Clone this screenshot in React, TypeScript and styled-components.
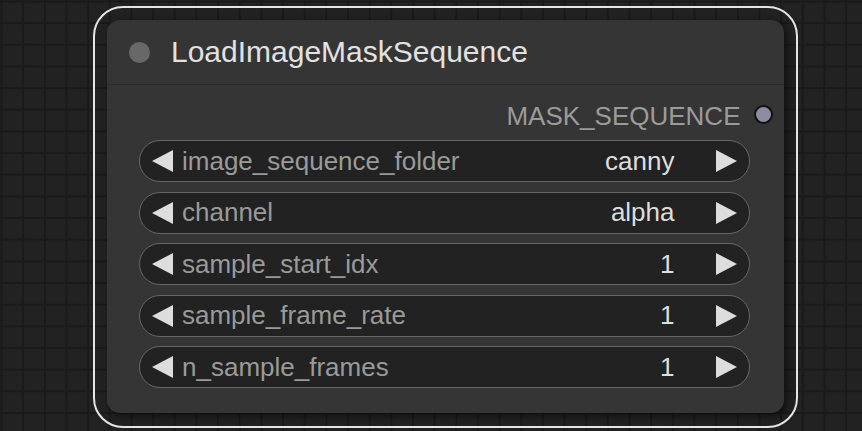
import React from 'react';
import styled, { createGlobalStyle } from 'styled-components';

const GlobalStyle = createGlobalStyle`
  html, body {
    margin: 0;
    padding: 0;
    background-color: #222222;
  }
  body {
    font-family: "Liberation Sans", Arial, sans-serif;
  }
`;

const Canvas = styled.div`
  width: 862px;
  height: 431px;
  overflow: hidden;
  box-sizing: border-box;
  padding: 6px 0 0 93px;
  background-color: #222222;
  background-image:
    linear-gradient(to right, #1a1a1a 0, #1a1a1a 2px, transparent 2px),
    linear-gradient(to bottom, #1a1a1a 0, #1a1a1a 2px, transparent 2px);
  background-size: 21.67px 21.67px;
  background-position: 0.5px 0.5px;
`;

const Selection = styled.div`
  width: 705px;
  height: 422px;
  box-sizing: border-box;
  border: 2px solid #e6e6e6;
  border-radius: 30px;
  padding: 12px 12px 0 11.5px;
`;

const Node = styled.div`
  width: 677px;
  height: 393px;
  background: #353535;
  border-radius: 13px;
  box-shadow: 3px 3px 9px rgba(0, 0, 0, 0.55);
  display: flex;
  flex-direction: column;
  overflow: hidden;
`;

const TitleBar = styled.div`
  height: 65px;
  flex: none;
  display: flex;
  align-items: center;
  padding-left: 22px;
  gap: 21.5px;
  border-bottom: 1.5px solid #2a2a2a;
  box-sizing: border-box;
`;

const TitleDot = styled.span`
  width: 21px;
  height: 21px;
  border-radius: 50%;
  background: #686868;
  flex: none;
  margin-top: 1px;
`;

const Title = styled.span`
  color: #e2e2e2;
  font-size: 30px;
  line-height: 1;
`;

const Body = styled.div`
  display: flex;
  flex-direction: column;
  padding-top: 9px;
`;

const OutputRow = styled.div`
  height: 42px;
  display: flex;
  align-items: center;
  justify-content: flex-end;
  padding-right: 11px;
  gap: 13px;
  margin-bottom: 4px;
`;

const OutputLabel = styled.span`
  color: #9b9b9b;
  font-size: 26px;
  margin-top: 2px;
`;

const Slot = styled.span`
  width: 15px;
  height: 15px;
  border-radius: 50%;
  background: #8c8ca3;
  border: 2.5px solid #111;
  flex: none;
  margin-top: -1px;
`;

const Widgets = styled.div`
  display: flex;
  flex-direction: column;
  gap: 9.6px;
  padding: 0 33.5px 0 32px;
`;

const Widget = styled.div`
  height: 42px;
  box-sizing: border-box;
  border: 1.5px solid #666;
  border-radius: 21px;
  background: #222;
  display: flex;
  align-items: center;
  padding: 0 12.5px 0 12.5px;
  font-size: 26px;
`;

const Label = styled.span`
  color: #9a9a9a;
  margin-left: 8px;
  flex: 1;
  white-space: nowrap;
`;

const Value = styled.span`
  color: #dedede;
  margin-right: 40px;
  white-space: nowrap;
`;

const Arrow = styled.svg`
  width: 22px;
  height: 22px;
  flex: none;
  fill: #dddddd;
`;

const LeftArrow = () => (
  <Arrow viewBox="0 0 22 22">
    <polygon points="0,11 21,0 21,22" />
  </Arrow>
);

const RightArrow = () => (
  <Arrow viewBox="0 0 22 22">
    <polygon points="22,11 1,0 1,22" />
  </Arrow>
);

const widgets = [
  { name: 'image_sequence_folder', value: 'canny' },
  { name: 'channel', value: 'alpha' },
  { name: 'sample_start_idx', value: '1' },
  { name: 'sample_frame_rate', value: '1' },
  { name: 'n_sample_frames', value: '1' },
];

const App: React.FC = () => {
  return (
    <>
      <GlobalStyle />
      <Canvas>
        <Selection>
          <Node>
            <TitleBar>
              <TitleDot />
              <Title>LoadImageMaskSequence</Title>
            </TitleBar>
            <Body>
              <OutputRow>
                <OutputLabel>MASK_SEQUENCE</OutputLabel>
                <Slot />
              </OutputRow>
              <Widgets>
                {widgets.map((w) => (
                  <Widget key={w.name}>
                    <LeftArrow />
                    <Label>{w.name}</Label>
                    <Value>{w.value}</Value>
                    <RightArrow />
                  </Widget>
                ))}
              </Widgets>
            </Body>
          </Node>
        </Selection>
      </Canvas>
    </>
  );
};

export default App;
